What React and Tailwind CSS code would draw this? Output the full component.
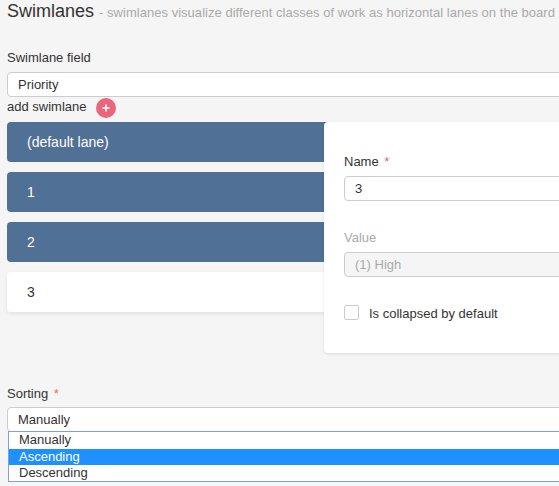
import React from 'react';

const lanes = ['(default lane)', '1', '2'];

const App = () => {
  return (
    <div className="h-[486px] w-full overflow-hidden bg-[#f5f5f5] font-['Liberation_Sans',Arial,sans-serif] text-[13px] text-[#333333]">
      <div className="w-[700px] pl-[7px]">
        <div className="flex h-[20px] items-baseline pt-px">
          <h2 className="text-[18px] leading-[20px] font-normal text-[#333333]">Swimlanes</h2>
          <span className="ml-[5px] text-[13px] leading-[20px] tracking-[0.03px] text-[#aaaaaa]">
            - swimlanes visualize different classes of work as horizontal lanes on the board
          </span>
        </div>

        <label className="mt-[30px] block h-[22px] leading-[15px]">Swimlane field</label>
        <div className="flex h-[25px] items-center rounded-[4px] border border-[#cccccc] bg-white pl-[10px]">Priority</div>

        <div className="flex h-[25px] items-start pt-px">
          <span className="pt-px leading-[15px]">add swimlane</span>
          <button className="ml-[9px] flex h-[20px] w-[20px] items-center justify-center rounded-full bg-[#e9677d] text-white">
            <svg width="8" height="8" viewBox="0 0 8 8">
              <path d="M4 .5v7M.5 4h7" stroke="currentColor" strokeWidth="1.6" />
            </svg>
          </button>
        </div>

        <div className="relative h-[251px]">
          <div className="flex flex-col gap-[10px]">
            {lanes.map((lane) => (
              <div key={lane} className="flex h-[40px] items-center rounded-[4px] bg-[#507096] pl-[20px] text-[14px] text-white">
                {lane}
              </div>
            ))}
            <div className="flex h-[40px] items-center rounded-[4px] bg-white pl-[20px] text-[14px] shadow-[0_2px_4px_rgba(0,0,0,0.08)]">3</div>
          </div>

          <div className="absolute top-0 left-[317px] h-[231px] w-[380px] rounded-[4px] bg-white pt-[32px] pl-[20px] shadow-[0_1px_3px_rgba(0,0,0,0.1)]">
            <label className="block h-[22px] leading-[15px]">
              Name <span className="ml-[2px] text-[#e9677d]">*</span>
            </label>
            <div className="flex h-[25px] items-center rounded-[4px] border border-[#cccccc] bg-white pl-[10px]">3</div>

            <label className="mt-[29px] block h-[22px] leading-[15px] text-[#aaaaaa]">Value</label>
            <div className="flex h-[25px] items-center rounded-[4px] border border-[#cccccc] bg-[#f5f5f5] pl-[10px] text-[#aaaaaa]">(1) High</div>

            <div className="mt-[28px] flex items-start">
              <span className="h-[15px] w-[15px] rounded-[2px] border border-[#cccccc] bg-white" />
              <span className="ml-[10px] pt-px leading-[15px]">Is collapsed by default</span>
            </div>
          </div>
        </div>

        <label className="mt-[13px] block h-[21px] leading-[15px]">
          Sorting <span className="ml-[2px] text-[#e9677d]">*</span>
        </label>
        <div className="flex h-[25px] items-center rounded-[4px] border border-[#cccccc] bg-white pl-[10px]">Manually</div>
        <div className="relative z-10 -mt-px ml-px border border-[#7f9fd9] bg-white">
          <div className="h-[17px] pl-[10px] leading-[16px]">Manually</div>
          <div className="h-[16px] bg-[#1e90ff] pl-[10px] leading-[16px] text-white">Ascending</div>
          <div className="h-[16px] pl-[10px] leading-[16px]">Descending</div>
        </div>
      </div>
    </div>
  );
};

export default App;
